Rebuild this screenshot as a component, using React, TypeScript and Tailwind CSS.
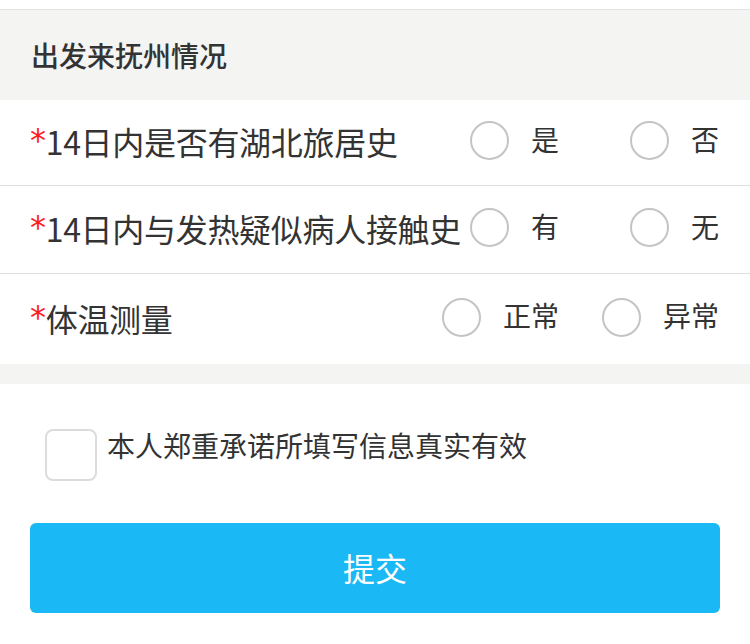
import React from "react";

const font = { fontFamily: '"Noto Sans CJK SC", "Noto Sans", sans-serif' };

function Radio() {
  return <span className="block w-[39px] h-[39px] rounded-full border-2 border-[#c4c4c4] bg-white shrink-0" />;
}

function Option({ label }: { label: string }) {
  return (
    <div className="w-[160px] flex items-center justify-end">
      <Radio />
      <span className="ml-[22px] text-[28px] leading-none text-[#333] -mt-[4px]">{label}</span>
    </div>
  );
}

function Row({ label, a, b, h, border }: { label: string; a: string; b: string; h: string; border: boolean }) {
  return (
    <div className={`flex items-center pl-[30px] pr-[31px] bg-white ${h} ${border ? "border-b border-[#dedede]" : ""}`}>
      <div className="flex-1 min-w-0 whitespace-nowrap text-[32px] leading-none text-[#333] flex items-center -mt-[3px] tracking-[-0.3px]">
        <span className="text-[#ff1a1a] text-[32px] -mt-[2px]" style={{ fontFamily: '"DejaVu Sans", sans-serif' }}>*</span>
        <span>{label}</span>
      </div>
      <div className="flex shrink-0 -mt-[4px]">
        <Option label={a} />
        <Option label={b} />
      </div>
    </div>
  );
}

export default function App() {
  return (
    <div className="w-[750px] h-[644px] bg-white overflow-hidden" style={font}>
      <div className="h-[10px] bg-white border-b border-[#e2e2e2]" />
      <div className="h-[90px] bg-[#f4f4f3] flex items-center pl-[31px]">
        <span className="text-[28px] font-medium text-[#333] leading-none">出发来抚州情况</span>
      </div>
      <Row label="14日内是否有湖北旅居史" a="是" b="否" h="h-[86px]" border />
      <Row label="14日内与发热疑似病人接触史" a="有" b="无" h="h-[88px]" border />
      <Row label="体温测量" a="正常" b="异常" h="h-[90px]" border={false} />
      <div className="h-[20px] bg-[#f4f4f3]" />
      <div className="pt-[45px] pl-[45px] flex items-start">
        <span className="block w-[52px] h-[52px] rounded-[8px] border-2 border-[#dcdcdc] bg-white shrink-0" />
        <span className="ml-[10px] text-[28px] leading-none text-[#333] mt-[2px]">本人郑重承诺所填写信息真实有效</span>
      </div>
      <div className="px-[30px] mt-[42px]">
        <button className="w-full h-[90px] rounded-[6px] bg-[#1bb8f6] text-white text-[32px] flex items-center justify-center leading-none pb-[2px]">
          提交
        </button>
      </div>
    </div>
  );
}
